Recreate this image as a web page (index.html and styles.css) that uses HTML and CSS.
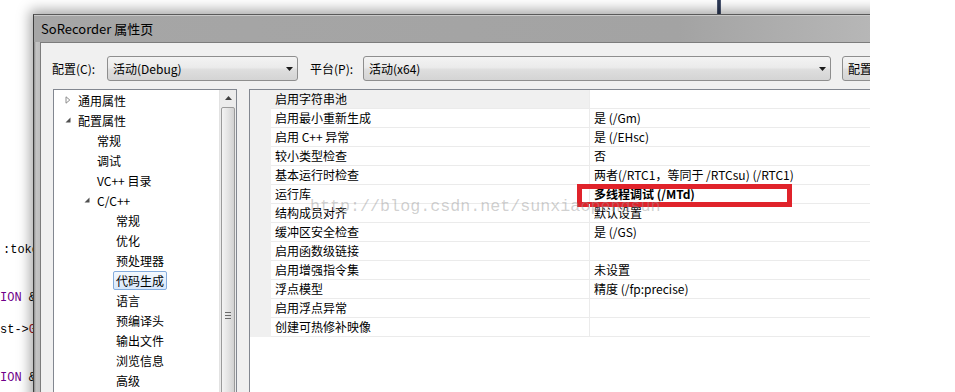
FILE: index.html
```html
<!DOCTYPE html>
<html lang="zh-CN">

<head>
    <meta charset="utf-8">
    <title>SoRecorder 属性页</title>
    <link rel="stylesheet" href="styles.css">
</head>

<body>
    <div class="screen">
        <!-- editor peeking out behind the dialog -->
        <div class="editor">
            <div class="code-line pad">:toke</div>
            <div class="code-line"></div>
            <div class="code-line"></div>
            <div class="code-line"><span class="kw">ION</span> &amp;&amp;</div>
            <div class="code-line"></div>
            <div class="code-line">st-&gt;<span class="fn">Ge</span></div>
            <div class="code-line"></div>
            <div class="code-line"></div>
            <div class="code-line"><span class="kw">ION</span> &amp;&amp;</div>
        </div>

        <div class="dialog">
            <div class="titlebar">SoRecorder 属性页</div>
            <div class="client">
                <div class="config-bar">
                    <label class="lbl-config">配置(C):</label>
                    <div class="combo combo-config">
                        <span>活动(Debug)</span>
                        <svg width="7" height="4" viewBox="0 0 7 4"><path d="M0 0h7L3.5 4z" fill="#1a1a1a"/></svg>
                    </div>
                    <label class="lbl-platform">平台(P):</label>
                    <div class="combo combo-platform">
                        <span>活动(x64)</span>
                        <svg width="7" height="4" viewBox="0 0 7 4"><path d="M0 0h7L3.5 4z" fill="#1a1a1a"/></svg>
                    </div>
                    <div class="combo config-btn">配置管理器(O)...</div>
                </div>

                <div class="panes">
                    <div class="tree">
                        <ul class="tree-list">
                            <li class="lvl1"><span class="twisty"><svg width="6" height="8" viewBox="0 0 6 8"><path d="M1 0.8v6.4L4.8 4z" fill="none" stroke="#8c8c8c"/></svg></span>通用属性</li>
                            <li class="lvl1"><span class="twisty"><svg width="6" height="8" viewBox="0 0 6 8"><path d="M5.5 1.5v5h-5z" fill="#505050"/></svg></span>配置属性</li>
                            <li class="lvl2"><span class="twisty"></span>常规</li>
                            <li class="lvl2"><span class="twisty"></span>调试</li>
                            <li class="lvl2"><span class="twisty"></span>VC++ 目录</li>
                            <li class="lvl2"><span class="twisty"><svg width="6" height="8" viewBox="0 0 6 8"><path d="M5.5 1.5v5h-5z" fill="#505050"/></svg></span>C/C++</li>
                            <li class="lvl3"><span class="twisty"></span>常规</li>
                            <li class="lvl3"><span class="twisty"></span>优化</li>
                            <li class="lvl3"><span class="twisty"></span>预处理器</li>
                            <li class="lvl3"><span class="twisty"></span><span class="tree-sel">代码生成</span></li>
                            <li class="lvl3"><span class="twisty"></span>语言</li>
                            <li class="lvl3"><span class="twisty"></span>预编译头</li>
                            <li class="lvl3"><span class="twisty"></span>输出文件</li>
                            <li class="lvl3"><span class="twisty"></span>浏览信息</li>
                            <li class="lvl3"><span class="twisty"></span>高级</li>
                        </ul>
                        <div class="scrollbar">
                            <div class="sb-up">
                                <svg width="7" height="4" viewBox="0 0 7 4"><path d="M0 4h7L3.5 0z" fill="#404040"/></svg>
                            </div>
                            <div class="sb-thumb">
                                <div class="grip"></div>
                                <div class="grip"></div>
                                <div class="grip"></div>
                            </div>
                        </div>
                    </div>

                    <div class="grid">
                        <div class="prop-row first"><div class="gutter"></div><div class="prop-name">启用字符串池</div><div class="prop-value"></div></div>
                        <div class="prop-row"><div class="gutter"></div><div class="prop-name">启用最小重新生成</div><div class="prop-value">是 (/Gm)</div></div>
                        <div class="prop-row"><div class="gutter"></div><div class="prop-name">启用 C++ 异常</div><div class="prop-value">是 (/EHsc)</div></div>
                        <div class="prop-row"><div class="gutter"></div><div class="prop-name">较小类型检查</div><div class="prop-value">否</div></div>
                        <div class="prop-row"><div class="gutter"></div><div class="prop-name">基本运行时检查</div><div class="prop-value">两者(/RTC1，等同于 /RTCsu) (/RTC1)</div></div>
                        <div class="prop-row"><div class="gutter"></div><div class="prop-name">运行库</div><div class="prop-value changed">多线程调试 (/MTd)<div class="mark"></div></div></div>
                        <div class="prop-row"><div class="gutter"></div><div class="prop-name">结构成员对齐</div><div class="prop-value">默认设置</div></div>
                        <div class="prop-row"><div class="gutter"></div><div class="prop-name">缓冲区安全检查</div><div class="prop-value">是 (/GS)</div></div>
                        <div class="prop-row"><div class="gutter"></div><div class="prop-name">启用函数级链接</div><div class="prop-value"></div></div>
                        <div class="prop-row"><div class="gutter"></div><div class="prop-name">启用增强指令集</div><div class="prop-value">未设置</div></div>
                        <div class="prop-row"><div class="gutter"></div><div class="prop-name">浮点模型</div><div class="prop-value">精度 (/fp:precise)</div></div>
                        <div class="prop-row"><div class="gutter"></div><div class="prop-name">启用浮点异常</div><div class="prop-value"></div></div>
                        <div class="prop-row"><div class="gutter"></div><div class="prop-name">创建可热修补映像</div><div class="prop-value"></div></div>
                    </div>
                </div>
            </div>
        </div>

        <div class="bg-line"></div>
        <div class="watermark">http://blog.csdn.net/sunxiaopengsun</div>
    </div>
</body>

</html>
```

FILE: styles.css
```css
* {
    box-sizing: border-box;
}

body {
    margin: 0;
    background-color: #fff;
    font-family: "Noto Sans CJK SC", "Noto Sans", sans-serif;
    font-size: 12px;
    color: #000;
}

/* the screenshot was cut at 870px, the rest is white */
.screen {
    position: relative;
    width: 870px;
    height: 392px;
    overflow: hidden;
    display: flex;
    align-items: flex-start;
}

/* editor behind */
.editor {
    flex: none;
    width: 33px;
    height: 392px;
    padding-top: 242px;
    overflow: hidden;
    font-family: "Liberation Mono", monospace;
    font-size: 12px;
    line-height: 16px;
    white-space: nowrap;
}

.code-line {
    height: 16px;
}

.code-line.pad {
    padding-left: 3px;
}

.kw {
    color: #6f008a;
}

.fn {
    color: #a31515;
}

.bg-line {
    position: absolute;
    left: 717px;
    top: 0;
    width: 4px;
    height: 15px;
    background: linear-gradient(to right, #5b6680, #1d2a48, #5b6680);
}

/* dialog */
.dialog {
    flex: none;
    position: relative;
    z-index: 1;
    width: 860px;
    height: 400px;
    margin-top: 14px;
    display: flex;
    flex-direction: column;
    background: linear-gradient(to right, #8a8a8a 0, #c4c4c4 2px, #bcbcbc 7px);
    border-top: 1px solid #5a5a5a;
    border-left: 1px solid #3e3e3e;
    box-shadow: -3px -4px 12px rgba(0, 0, 0, 0.35);
}

.titlebar {
    height: 27px;
    line-height: 27px;
    padding-left: 7px;
    font-size: 13px;
    background: linear-gradient(to right, #a6a6a6 0%, #a3a3a3 75%, #b9b9b9 100%);
    box-shadow: inset 0 1px 0 #c9c9c9;
}

.client {
    flex: 1;
    margin-left: 6px;
    padding: 13px 0 0 11px;
    background-color: #f0f0f0;
    border-top: 1px solid #7c7c7c;
    border-left: 1px solid #7c7c7c;
}

.config-bar {
    display: flex;
    align-items: center;
    height: 25px;
}

.lbl-config {
    flex: none;
    width: 55px;
}

.lbl-platform {
    flex: none;
    width: 53px;
}

.combo {
    flex: none;
    height: 25px;
    display: flex;
    align-items: center;
    justify-content: space-between;
    padding: 0 4px 0 5px;
    border: 1px solid #8e8e8e;
    border-radius: 3px;
    background: linear-gradient(#f3f3f3, #ebebeb 45%, #dedede 55%, #d4d4d4);
}

.combo-config {
    width: 191px;
    margin-right: 12px;
}

.combo-platform {
    width: 468px;
    margin-right: 11px;
}

.config-btn {
    width: 120px;
    justify-content: flex-start;
}

.panes {
    display: flex;
    margin-top: 8px;
    height: 320px;
}

/* tree */
.tree {
    flex: none;
    width: 184px;
    margin-left: 1px;
    display: flex;
    background-color: #fff;
    border: 1px solid #828790;
}

.tree-list {
    flex: 1;
    list-style: none;
    margin: 0;
    padding: 0;
}

.tree-list li {
    display: flex;
    align-items: center;
    height: 20px;
    white-space: nowrap;
}

.lvl1 {
    padding-left: 10px;
}

.lvl2 {
    padding-left: 29px;
}

.lvl3 {
    padding-left: 48px;
}

.twisty {
    flex: none;
    width: 14px;
    display: flex;
    align-items: center;
    padding-left: 1px;
}

.tree-sel {
    height: 19px;
    margin-left: -3px;
    padding: 0 2px;
    line-height: 17px;
    border: 1px solid #84acdd;
    border-radius: 2px;
    background: linear-gradient(#f3f8fe, #d8e8fc);
}

.scrollbar {
    flex: none;
    width: 17px;
    display: flex;
    flex-direction: column;
    align-items: center;
    background-color: #ececec;
    border-left: 1px solid #e2e2e2;
}

.sb-up {
    height: 18px;
    width: 100%;
    display: flex;
    align-items: center;
    justify-content: center;
}

.sb-thumb {
    width: 14px;
    height: 320px;
    margin-top: 2px;
    padding-top: 204px;
    border: 1px solid #9b9b9b;
    border-radius: 2px;
    background: linear-gradient(to right, #f4f4f4, #e4e4e4 50%, #d2d2d2);
}

.grip {
    width: 6px;
    height: 1px;
    margin: 0 auto 2px;
    background-color: #6a6a6a;
}

/* property grid */
.grid {
    flex: none;
    width: 640px;
    margin-left: 12px;
    background-color: #fff;
    border-top: 1px solid #828790;
    border-left: 1px solid #828790;
}

.prop-row {
    display: flex;
    height: 19px;
    line-height: 18px;
}

.gutter {
    flex: none;
    width: 21px;
    background-color: #f0f0f0;
}

.prop-name {
    flex: none;
    width: 318px;
    padding-left: 4px;
    border-bottom: 1px solid #ebebeb;
    white-space: nowrap;
}

.prop-row.first .prop-name {
    background-color: #f0f0f0;
}

.prop-value {
    flex: 1;
    position: relative;
    padding-left: 4px;
    border-left: 1px solid #ebebeb;
    border-bottom: 1px solid #ebebeb;
    white-space: nowrap;
}

.changed {
    font-weight: bold;
}

.mark {
    position: absolute;
    left: -13px;
    top: -1px;
    width: 215px;
    height: 23px;
    border: 5px solid #e0232b;
}

.watermark {
    position: absolute;
    left: 310px;
    top: 198px;
    z-index: 2;
    font-family: "Liberation Mono", monospace;
    font-size: 16.7px;
    line-height: 18px;
    color: rgba(150, 150, 150, 0.45);
    white-space: nowrap;
}
```
